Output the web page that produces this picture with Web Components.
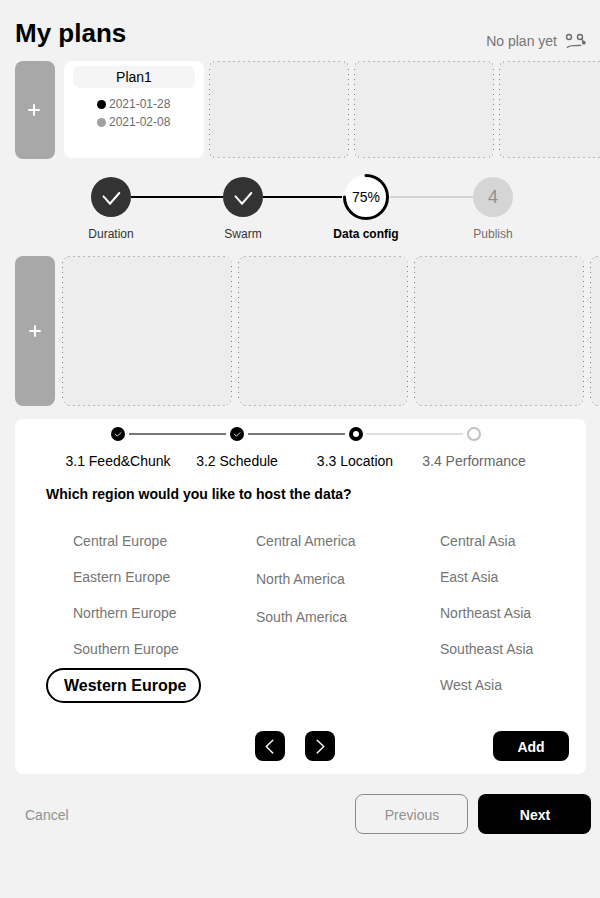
<!DOCTYPE html>
<html lang="en">
<head>
<meta charset="utf-8">
<title>My plans</title>
<style>
html,body{margin:0;padding:0;background:#f2f2f2;}
body{width:600px;height:898px;overflow:hidden;font:14px/16px "Liberation Sans",Arial,sans-serif;color:#000;}
</style>
</head>
<body>
<plans-page></plans-page>
<script>
const define = (name, html, setup) => customElements.define(name, class extends HTMLElement {
  connectedCallback() {
    if (this.shadowRoot) return;
    const t = document.createElement('template');
    t.innerHTML = typeof html === 'function' ? html(this) : html;
    this.attachShadow({mode: 'open'}).append(t.content.cloneNode(true));
    if (setup) setup(this);
  }
});

define('page-header', `
<style>
:host{display:flex;justify-content:space-between;height:61px;padding:0 13px 0 15px;box-sizing:border-box}
h1{margin:18px 0 0;font-size:26px;line-height:30px;font-weight:bold}
div{display:flex;gap:8px;margin-top:33px;color:#757575}
svg{display:block}
</style>
<h1>My plans</h1>
<div><span>No plan yet</span>
<svg width="22" height="16" viewBox="565 33 22 16" fill="none" stroke="#6e6e6e" stroke-width="1.4" stroke-linecap="round">
<circle cx="569" cy="37" r="2.5"/><circle cx="580" cy="37" r="2.5"/>
<path d="M567.4 47.2C570 45.2 572 45.6 575 45.6S579 45.2 580.8 45.4M581.9 39.3L583.6 42"/><circle cx="583.8" cy="42.7" r="1.2" fill="#6e6e6e"/>
</svg></div>`);

define('add-bar', `
<style>
:host{display:flex;align-items:center;justify-content:center;width:40px;flex:none;border-radius:8px;background:#a8a8a8}
svg{display:block}
</style>
<svg width="12" height="12" viewBox="0 0 12 12"><path d="M0.3 6H11.7M6 .3V11.7" stroke="#fff" stroke-width="1.9"/></svg>`,
el => { el.shadowRoot.querySelector('svg').style.margin = el.getAttribute('nudge') || '0'; });

// Dotted placeholder: long dashes along the horizontal edges, single dots along the vertical ones.
define('empty-slot', el => {
  const big = el.hasAttribute('big');
  const w = big ? 170 : 140, h = big ? 150 : 97;
  const x0 = big ? 6 : 9, x1 = big ? 163 : 131;
  const l0 = big ? 6 : 8, l1 = big ? 142 : 89, r0 = big ? 10 : 8, r1 = big ? 141 : 89;
  const corner = big
    ? 'M2.5 2v1M4 1.5h1M166.5 1v1M169 5.5h1M168 145.5h1M165.5 148v1M2.5 146v1M4.5 148v1'
    : 'M1.5 2v2M4.5 0v2M135.5 0v2M138.5 2v2M1.5 93v2M4.5 95v2M135.5 95v2M138.5 93v2';
  return `
<style>:host{display:block;flex:none;width:${w}px;height:${h}px;border-radius:8px;background:#ededed}svg{display:block}</style>
<svg width="${w}" height="${h}" fill="none">
<path d="M${x0} .5H${x1}M${x0} ${h - .5}H${x1}" stroke="#b8b8b8" stroke-dasharray="2 3"/>
<path d="M.5 ${l0}V${l1}M${w - .5} ${r0}V${r1}" stroke="#828282" stroke-dasharray="1 4"/>
<path d="${corner}" stroke="#c0c0c0"/></svg>`;
});

define('plan-card', `
<style>
:host{display:block;flex:none;width:140px;height:97px;box-sizing:border-box;padding:5px 9px;border-radius:8px;background:#fff}
.name{height:22px;line-height:22px;text-align:center;border-radius:7px;background:#f5f5f5}
.dates{display:flex;flex-direction:column;margin:7px 0 0 24px;font-size:12px;line-height:18px;color:#6b6b6b}
</style>
<div class="name"><slot name="name"></slot></div><div class="dates"><slot></slot></div>`);

define('plan-date', `
<style>
:host{display:flex;align-items:center;gap:3px}
i{width:9px;height:9px;border-radius:50%;background:var(--dot);margin-top:1px}
</style><i></i><slot></slot>`);

define('slot-row', `
<style>:host{display:flex;align-items:flex-start;padding-left:15px;overflow:hidden}
div{display:flex;gap:var(--gap);margin-left:var(--lead)}</style>
<slot name="bar"></slot><div><slot></slot></div>`);

define('main-step', el => {
  const kind = el.getAttribute('kind');
  const art = {
    done: '<circle cx="23" cy="23" r="20" fill="#333"/><path d="M15.5 22.4L22 29.7L31.3 19" fill="none" stroke="#fff" stroke-width="2" stroke-linecap="round"/>',
    active: '<circle cx="23" cy="23" r="22.3" fill="#fff" stroke="#f5f5f5" stroke-width="1.4"/><path d="M23 1.5A21.5 21.5 0 1 1 1.5 23" fill="none" stroke="#000" stroke-width="3" stroke-linecap="round"/>',
    todo: '<circle cx="23" cy="23" r="20" fill="#d5d5d5"/>'
  }[kind];
  const mark = kind === 'active' ? '75%' : kind === 'todo' ? '4' : '';
  return `
<style>
:host{display:flex;flex-direction:column;align-items:center;flex:none;width:${kind === 'active' ? 48 : 40}px}
.disc{display:grid;place-items:center;width:46px;height:46px}
.disc>*{grid-area:1/1}
svg{display:block;overflow:visible}
.mark{font-size:${kind === 'todo' ? 18 : 14}px;color:${kind === 'todo' ? '#919191' : '#000'}}
.label{margin-top:7px;font-size:12px;line-height:14px;white-space:nowrap;color:${kind === 'todo' ? '#707070' : kind === 'done' ? '#333' : '#000'};font-weight:${kind === 'active' ? 'bold' : 'normal'}}
</style>
<div class="disc"><svg width="46" height="46">${art}</svg><span class="mark">${mark}</span></div>
<div class="label"><slot></slot></div>`;
});

define('step-line', `<style>:host{display:block;flex:1;height:2px;background:var(--c,#000);margin-top:var(--drop,22px)}</style>`);

define('main-steps', `
<style>:host{display:flex;align-items:flex-start;height:82px;margin:15px 87px 0 91px}</style><slot></slot>`);

define('sub-step', el => {
  const kind = el.getAttribute('kind');
  const art = {
    done: '<circle cx="7" cy="7" r="7"/><path d="M4 6.8L6.4 9.2L10.2 5.4" fill="none" stroke="#ddd" stroke-width="1"/>',
    active: '<circle cx="7" cy="7" r="5" fill="#fff" stroke="#000" stroke-width="4"/>',
    todo: '<circle cx="7" cy="7" r="6" fill="#fff" stroke="#c2c2c2" stroke-width="2"/>'
  }[kind];
  return `
<style>
:host{display:flex;flex-direction:column;align-items:center;flex:none;width:14px;color:${kind === 'todo' ? '#666' : '#000'}}
svg{display:block}.label{margin-top:12px;white-space:nowrap;${kind === 'active' ? 'padding-right:2px' : ''}}
</style>
<svg width="14" height="14">${art}</svg><div class="label"><slot></slot></div>`;
});

define('sub-steps', `
<style>:host{display:flex;align-items:flex-start;height:42px;padding:8px 105px 0 96px}</style><slot></slot>`);

define('region-item', el => el.hasAttribute('selected') ? `
<style>:host{display:flex;align-items:center;box-sizing:border-box;width:155px;height:35px;margin-left:-27px;padding-left:16px;border:2px solid #000;border-radius:18px;font-size:16px;font-weight:bold;margin-top:1px;white-space:nowrap}</style><slot></slot>`
: `<style>:host{display:flex;align-items:center;height:var(--pitch,36px);color:#757575}</style><slot></slot>`);

define('region-column', `<style>:host{display:flex;flex-direction:column}</style><slot></slot>`);

define('region-grid', `
<style>:host{display:grid;grid-template-columns:183px 184px 1fr;align-items:start;height:208px;padding:21px 0 0 58px}</style><slot></slot>`);

define('action-button', `
<style>
:host{display:block;flex:none;width:var(--w,30px);height:var(--h,30px)}
button{display:flex;align-items:center;justify-content:center;width:100%;height:100%;padding:2px 0 0 var(--shift,0px);box-sizing:border-box;border:0;border-radius:8px;background:#000;color:#fff;font:bold 14px/16px "Liberation Sans",Arial,sans-serif}
:host([outline]) button{background:transparent;border:1px solid #8c8c8c;color:#919191;font-weight:normal}
:host([icon]) button{padding:0}
::slotted(svg){display:block}
</style>
<button><slot></slot></button>`);

define('config-panel', `
<style>
:host{display:block;width:571px;height:355px;box-sizing:border-box;margin:13px 0 0 15px;border-radius:8px;background:#fff}
h2{margin:17px 0 0 31px;font-size:14px;line-height:16px}
.actions{display:flex;margin:0 0 0 240px;gap:20px}
</style>
<sub-steps>
<sub-step kind="done">3.1 Feed&amp;Chunk</sub-step><step-line style="--c:#777;--drop:6px;margin-left:4px;margin-right:4px"></step-line>
<sub-step kind="done">3.2 Schedule</sub-step><step-line style="--c:#777;--drop:6px;margin-left:4px;margin-right:4px"></step-line>
<sub-step kind="active">3.3 Location</sub-step><step-line style="--c:#e0e0e0;--drop:6px;margin-left:3px;margin-right:4px"></step-line>
<sub-step kind="todo">3.4 Performance</sub-step>
</sub-steps>
<h2>Which region would you like to host the data?</h2>
<region-grid>
<region-column><region-item>Central Europe</region-item><region-item>Eastern Europe</region-item><region-item>Northern Europe</region-item><region-item>Southern Europe</region-item><region-item selected>Western Europe</region-item></region-column>
<region-column style="--pitch:38px;margin-top:-1px"><region-item>Central America</region-item><region-item>North America</region-item><region-item>South America</region-item></region-column>
<region-column><region-item>Central Asia</region-item><region-item>East Asia</region-item><region-item>Northeast Asia</region-item><region-item>Southeast Asia</region-item><region-item>West Asia</region-item></region-column>
</region-grid>
<div class="actions">
<action-button icon><svg width="30" height="30" fill="none" stroke="#fff" stroke-width="1.4" stroke-linecap="round"><path d="M17.8 9.2L11.3 15.6L17.8 22"/></svg></action-button>
<action-button icon><svg width="30" height="30" fill="none" stroke="#fff" stroke-width="1.4" stroke-linecap="round"><path d="M12.2 9.2L18.7 15.6L12.2 22"/></svg></action-button>
<action-button style="--w:76px;margin-left:138px">Add</action-button>
</div>`);

define('page-footer', `
<style>
:host{display:flex;align-items:center;gap:10px;margin-top:20px;padding:0 9px 0 25px}
.cancel{flex:1;color:#919191;padding-top:2px}
</style>
<span class="cancel">Cancel</span>
<action-button outline style="--w:113px;--h:40px;--shift:1px">Previous</action-button>
<action-button style="--w:113px;--h:40px;--shift:1px">Next</action-button>`);

define('plans-page', `
<style>:host{display:block;width:600px;height:898px;overflow:hidden}</style>
<page-header></page-header>
<slot-row style="--gap:5px;--lead:9px">
<add-bar slot="bar" nudge="0 2px 0 0" style="height:98px"></add-bar>
<plan-card><span slot="name">Plan1</span><plan-date style="--dot:#000">2021-01-28</plan-date><plan-date style="--dot:#a0a0a0">2021-02-08</plan-date></plan-card>
<empty-slot></empty-slot><empty-slot></empty-slot><empty-slot></empty-slot>
</slot-row>
<main-steps>
<main-step kind="done">Duration</main-step><step-line style="flex:0 0 92px"></step-line>
<main-step kind="done">Swarm</main-step><step-line></step-line>
<main-step kind="active">Data config</main-step><step-line style="--c:#d3d3d3;flex:0 0 83px"></step-line>
<main-step kind="todo">Publish</main-step>
</main-steps>
<slot-row style="--gap:6px;--lead:7px">
<add-bar slot="bar" style="height:150px"></add-bar>
<empty-slot big></empty-slot><empty-slot big></empty-slot><empty-slot big></empty-slot><empty-slot big></empty-slot>
</slot-row>
<config-panel></config-panel>
<page-footer></page-footer>`);
</script>
</body>
</html>
